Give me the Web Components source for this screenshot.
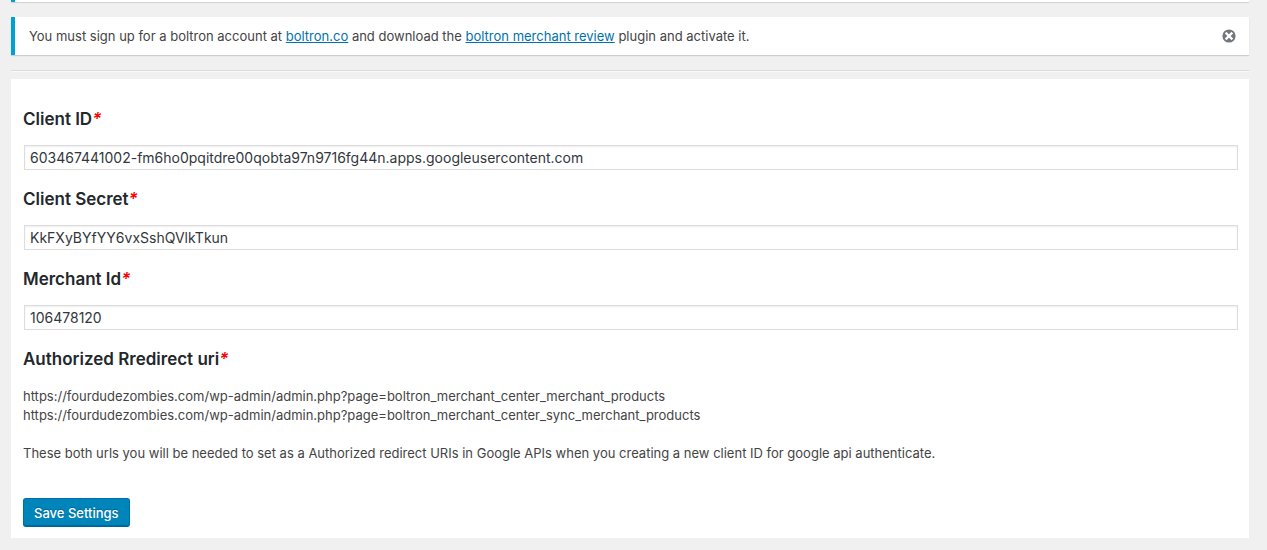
<!DOCTYPE html>
<html lang="en">
<head>
<meta charset="utf-8">
<title>Merchant Center Settings</title>
<style>
  body { margin: 0; background: #f0f0f0; color: #444; font: 13px/19px Inter, "Liberation Sans", sans-serif; }
  a { color: #0073aa; text-decoration: underline; }
</style>
</head>
<body>
<settings-page>
  <admin-notice slot="notices" tail></admin-notice>
  <admin-notice slot="notices">You must sign up for a boltron account at <a href="#">boltron.co</a> and download the <a href="#">boltron merchant review</a> plugin and activate it.</admin-notice>
  <settings-field name="client_id" value="603467441002-fm6ho0pqitdre00qobta97n9716fg44n.apps.googleusercontent.com">Client ID</settings-field>
  <settings-field name="client_secret" value="KkFXyBYfYY6vxSshQVlkTkun">Client Secret</settings-field>
  <settings-field name="merchant_id" value="106478120">Merchant Id</settings-field>
  <redirect-info></redirect-info>
  <save-button>Save Settings</save-button>
</settings-page>

<template id="page-template">
  <style>
    :host { display: block; padding: 0 18px 12px 11px; }
    .notices { display: grid; gap: 15px; }
    hr { margin: 15px 0 7px; border: 0; border-top: 1px solid #dadada; border-bottom: 1px solid #fafafa; }
    main { display: grid; gap: 17px; padding: 28px 11px 11px 12px; background: #fff; }
  </style>
  <div class="notices"><slot name="notices"></slot></div>
  <hr>
  <main><slot></slot></main>
</template>

<template id="notice-template">
  <style>
    :host { display: flex; align-items: center; min-height: 38px; box-sizing: border-box; padding: 0 12px 0 14px; background: #fff; border-left: 4px solid #00a0d2; box-shadow: 0 1px 1px rgba(0,0,0,.14); }
    :host([tail]) { min-height: 2px; height: 2px; padding: 0; overflow: hidden; }
    :host([tail]) button { display: none; }
    p { flex: 1; margin: 0; }
    button { display: flex; padding: 1px; border: 0; background: none; cursor: pointer; }
    svg { width: 14px; height: 14px; }
  </style>
  <p><slot></slot></p>
  <button type="button" aria-label="Dismiss this notice">
    <svg viewBox="0 0 14 14"><circle cx="7" cy="7" r="6.6" fill="#72777c"/><path d="M4.5 4.5l5 5M9.5 4.5l-5 5" stroke="#fff" stroke-width="2.4" stroke-linecap="square"/></svg>
  </button>
</template>

<template id="field-template">
  <style>
    :host { display: grid; gap: 14px; }
    label { color: #23282d; font-size: 17px; font-weight: 600; line-height: 24px; }
    .required { color: #f00; font-style: italic; }
    input { width: calc(100% - 1px); height: 25px; box-sizing: border-box; margin: 0 0 0 1px; padding: 0 5px; border: 1px solid #ddd; border-radius: 0; background: #fff; box-shadow: inset 0 1px 2px rgba(0,0,0,.07); color: #32373c; font: 14px/23px Inter, "Liberation Sans", sans-serif; }
  </style>
  <label for="value"><slot></slot><span class="required">*</span></label>
  <input id="value" type="text" required>
</template>

<template id="redirect-template">
  <style>
    :host { display: grid; gap: 16px; }
    h2 { margin: 0; color: #23282d; font-size: 17px; font-weight: 600; line-height: 24px; }
    .required { color: #f00; font-style: italic; }
    .urls { margin: 0 0 3px; }
    p { margin: 0; }
  </style>
  <h2>Authorized Rredirect uri<span class="required">*</span></h2>
  <p class="urls">https://fourdudezombies.com/wp-admin/admin.php?page=boltron_merchant_center_merchant_products<br>https://fourdudezombies.com/wp-admin/admin.php?page=boltron_merchant_center_sync_merchant_products</p>
  <p>These both urls you will be needed to set as a Authorized redirect URIs in Google APIs when you creating a new client ID for google api authenticate.</p>
</template>

<template id="button-template">
  <style>
    :host { display: block; margin-top: 18px; }
    button { height: 29px; padding: 0 10px; border: 1px solid #006ea8; border-bottom-color: #006799; border-radius: 3px; background: #0085ba; box-shadow: inset 0 -1px 0 #006799; color: #fff; font: 500 13px/26px Inter, "Liberation Sans", sans-serif; text-shadow: 0 -1px 1px #006799; cursor: pointer; }
  </style>
  <button type="submit"><slot></slot></button>
</template>

<script>
  class TemplateElement extends HTMLElement {
    constructor() {
      super();
      const template = document.getElementById(this.constructor.template);
      this.attachShadow({ mode: "open" }).append(template.content.cloneNode(true));
    }
  }
  customElements.define("settings-page", class extends TemplateElement {
    static template = "page-template";
  });
  customElements.define("admin-notice", class extends TemplateElement {
    static template = "notice-template";
    connectedCallback() {
      this.shadowRoot.querySelector("button").addEventListener("click", () => this.remove());
    }
  });
  customElements.define("settings-field", class extends TemplateElement {
    static template = "field-template";
    connectedCallback() {
      const input = this.shadowRoot.querySelector("input");
      input.name = this.getAttribute("name");
      input.value = this.getAttribute("value");
    }
  });
  customElements.define("redirect-info", class extends TemplateElement {
    static template = "redirect-template";
  });
  customElements.define("save-button", class extends TemplateElement {
    static template = "button-template";
  });
</script>
</body>
</html>
